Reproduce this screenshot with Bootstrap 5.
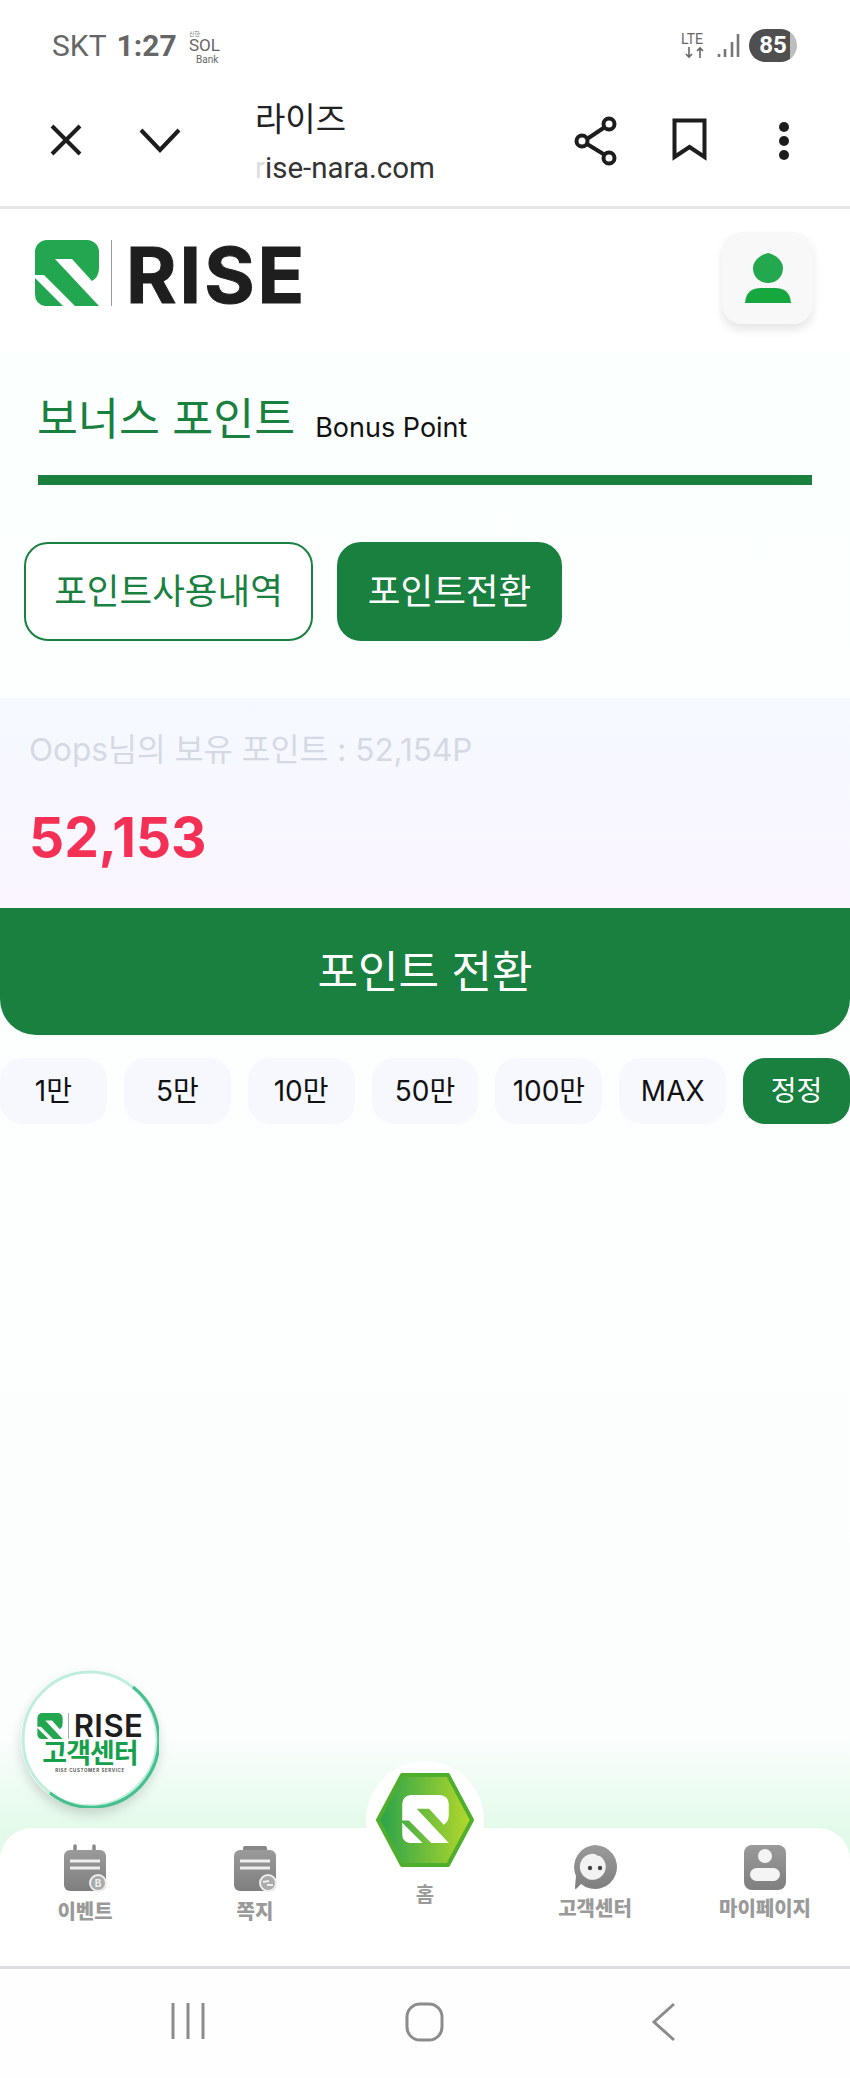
<!DOCTYPE html>
<html lang="ko">
<head>
  <meta charset="UTF-8" />
  <meta name="viewport" content="width=device-width, initial-scale=1.0"/>
  <title>라이즈 - 포인트전환</title>
  <link href="https://cdn.jsdelivr.net/npm/bootstrap@5.3.0/dist/css/bootstrap.min.css" rel="stylesheet">
  <style>
    html, body { margin: 0; }
    body { width: 850px; height: 2078px; overflow: hidden; background: #fff; font-family: Inter, "Noto Sans CJK KR", sans-serif; color: #111; }
    .phone-status { height: 75px; padding: 29px 53px 0 52px; font-family: Roboto, "Noto Sans CJK KR", sans-serif; color: #666; }
    .status-carrier { font-size: 30px; line-height: 34px; }
    .status-time { font-size: 30px; line-height: 34px; font-weight: 700; margin-left: 10px; }
    .status-sol { margin-left: 12px; }
    .status-right { padding-top: 3px; }
    .status-battery { width: 48px; height: 33px; margin-top: -3px; border-radius: 17px; background: linear-gradient(90deg, #4f4f4f 85%, #bdbdbd 85%); color: #fff; font-size: 24px; font-weight: 700; line-height: 33px; text-align: center; }
    .browser-bar { height: 134px; border-bottom: 3px solid #e6e6e6; position: relative; }
    .bar-ico { position: absolute; display: block; }
    .browser-title { position: absolute; left: 255px; top: 22px; font-size: 33px; line-height: 44px; color: #222; }
    .browser-url { position: absolute; left: 255px; top: 75px; font-family: Roboto, sans-serif; font-size: 29.500px; line-height: 36px; color: #333; }
    .browser-url i { font-style: normal; color: #ddd; }
    .site-head { height: 143px; padding: 29px 37px 0 35px; }
    .logo-rule { width: 1px; height: 66px; background: #9a9a9a; margin: 0 14px 0 12px; }
    .logo-word { font-family: Inter, sans-serif; font-weight: 700; font-size: 77px; line-height: 66px; letter-spacing: 3px; padding-top: 4px; color: #1e1e1e; -webkit-text-stroke: 1px #1e1e1e; }
    .profile-btn { width: 91px; height: 92px; margin-top: -6px; border-radius: 20px; background: #f8f8f8; box-shadow: 0 6px 10px rgba(0,0,0,.10); }
    .page-main { position: relative; height: 1614px; background: linear-gradient(#fbfffd 0, #fcfefe 85.5%, #e3faea 91.5%); }
    .title-wrap { margin: 0 38px; height: 133px; padding-top: 37px; border-bottom: 10px solid #198040; }
    .title-ko { font-size: 44.500px; line-height: 60px; color: #198040; font-weight: 400; margin-left: -1px; }
    .title-en { font-size: 27px; line-height: 60px; margin-left: 20px; padding-top: 9px; color: #111; }
    .tab-row { padding: 57px 0 0 24px; gap: 24px; }
    .tab-btn { height: 99px; border-radius: 24px; font-size: 35.500px; font-weight: 400; border: 2px solid #198040; color: #198040; background: #fff; padding: 0; display: flex; align-items: center; justify-content: center; }
    .tab-btn:hover { color: #198040; border-color: #198040; background: #fff; }
    .tab-wide { width: 289px; }
    .tab-narrow { width: 225px; }
    .tab-fill, .tab-fill:hover { background: #198040; color: #fff; }
    .point-panel { margin-top: 57px; height: 210px; padding: 30px 29px 0; background: linear-gradient(#f5f9ff, #faf5ff); }
    .point-owned { font-size: 31.500px; line-height: 44px; color: #d5d9e4; }
    .point-value { font-size: 55px; font-weight: 700; line-height: 70px; margin-top: 30px; color: #f43155; }
    .convert-btn { width: 100%; height: 127px; padding: 0; border: 0; border-radius: 0 0 36px 36px; background: #198040; color: #fff; font-size: 44px; font-weight: 400; }
    .convert-btn:hover { background: #198040; color: #fff; }
    .quick-row { margin-top: 23px; gap: 17px; }
    .quick-btn { flex: 1 1 0; height: 66px; padding: 0; border: 0; border-radius: 22px; background: #f7f8fe; color: #111; font-size: 28px; font-weight: 400; }
    .quick-btn:hover { background: #f7f8fe; color: #111; }
    .quick-on, .quick-on:hover { background: #198040; color: #fff; }
    .cs-float { position: absolute; left: 21px; top: 1318px; width: 138px; height: 138px; border-radius: 50%; background: radial-gradient(circle, #fff 78%, #e4f8ef 100%); box-shadow: 0 6px 12px rgba(0,0,0,.16); padding-top: 43px; }
    .cs-ring { position: absolute; left: 0; top: 0; }
    .cs-word { font-family: Inter, sans-serif; font-weight: 600; font-size: 31px; line-height: 26px; color: #1e1e1e; letter-spacing: .5px; }
    .cs-rule { width: 1px; height: 26px; background: #aaa; margin: 0 5px; }
    .cs-ko { font-size: 27px; line-height: 27px; margin-top: 1px; font-weight: 700; letter-spacing: -1px; color: #17a04c; }
    .cs-en { font-size: 4.500px; line-height: 7px; font-weight: 700; letter-spacing: .6px; color: #555; }
    .bottom-tabs { position: absolute; left: 0; right: 0; bottom: 0; height: 138px; padding-top: 16px; background: #fff; border-radius: 32px 32px 0 0; }
    .tab-label { font-size: 20px; line-height: 26px; font-weight: 800; color: #9a9a9a; margin-top: 4px; }
    .tab-label-low { margin-top: 7px; }
    .home-disc { position: absolute; left: 366px; top: -67px; width: 118px; height: 118px; border-radius: 50%; background: #fff; }
    .home-label { margin-top: 22px; font-weight: 700; }
    .home-cell { padding-top: 16px; }
    .sys-nav { height: 112px; border-top: 3px solid #dedde2; padding: 33px 0 0 170px; background: #fefefe; }
    .sys-home { margin-left: 199px; }
    .sys-back { margin-left: 206px; }
  </style>
</head>
<body>
  <svg width="0" height="0" class="position-absolute">
    <defs>
      <symbol id="rise-mark" viewBox="0 0 64 66">
        <path fill="currentColor" d="M0 12A12 12 0 0 1 12 0H52A12 12 0 0 1 64 12V28Q64 37 57 41L37 19H20L64 66H40L9 35H0Z"/>
        <path fill="currentColor" d="M0 38L28 66H10Q0 64 0 54Z"/>
      </symbol>
      <linearGradient id="gray-g" x1="0" y1="0" x2="0" y2="1"><stop offset="0" stop-color="#9a9a9a"/><stop offset="1" stop-color="#7f7f7f"/></linearGradient>
      <linearGradient id="hex-g" x1="0" y1="0" x2="1" y2="0"><stop offset="0" stop-color="#27a24b"/><stop offset="1" stop-color="#b6d92b"/></linearGradient>
    </defs>
  </svg>

  <div class="phone-status d-flex align-items-start">
    <span class="status-carrier">SKT</span>
    <span class="status-time">1:27</span>
    <svg class="status-sol" width="34" height="36" viewBox="0 0 34 36">
      <text x="0" y="7" font-size="6" fill="#777" font-family="Noto Sans CJK KR">신한</text>
      <text x="0" y="22" font-size="17" fill="#666" font-family="Roboto">SOL</text>
      <text x="7" y="34" font-size="10" fill="#666" font-family="Roboto">Bank</text>
    </svg>
    <div class="ms-auto d-flex align-items-start gap-2 status-right">
      <svg width="28" height="28" viewBox="0 0 28 28">
        <text x="0" y="12" font-size="14" fill="#666" font-family="Roboto">LTE</text>
        <path d="M8 15V25M5 22L8 25L11 22M19 26V16M16 19L19 16L22 19" fill="none" stroke="#666" stroke-width="1.600"/>
      </svg>
      <svg width="24" height="26" viewBox="0 0 24 26"><path d="M2 22V25M8 17V25M15 10V25M21 2V25" stroke="#777" stroke-width="2.600" fill="none"/></svg>
      <div class="status-battery">85</div>
    </div>
  </div>

  <div class="browser-bar">
    <svg class="bar-ico" style="left:50px;top:49px" width="32" height="32" viewBox="0 0 32 32"><path d="M2 2L30 30M30 2L2 30" stroke="#1d1d1d" stroke-width="4" fill="none"/></svg>
    <svg class="bar-ico" style="left:139px;top:52px" width="42" height="26" viewBox="0 0 42 26"><path d="M2 3L21 23L40 3" stroke="#1d1d1d" stroke-width="4" fill="none"/></svg>
    <div class="browser-title">라이즈</div>
    <div class="browser-url"><i>r</i>ise-nara.com</div>
    <svg class="bar-ico" style="left:574px;top:41px" width="44" height="50" viewBox="0 0 44 50"><path d="M31 11L13 23M13 28L31 39" stroke="#1d1d1d" stroke-width="4" fill="none"/><circle cx="35" cy="8" r="5.500" fill="none" stroke="#1d1d1d" stroke-width="4"/><circle cx="8" cy="25" r="5.500" fill="none" stroke="#1d1d1d" stroke-width="4"/><circle cx="35" cy="42" r="5.500" fill="none" stroke="#1d1d1d" stroke-width="4"/></svg>
    <svg class="bar-ico" style="left:672px;top:43px" width="35" height="43" viewBox="0 0 35 43"><path d="M2.500 2.500H32.500V39L17.500 29L2.500 39Z" stroke="#1d1d1d" stroke-width="4" fill="none"/></svg>
    <svg class="bar-ico" style="left:778px;top:46px" width="12" height="40" viewBox="0 0 12 40"><circle cx="6" cy="6" r="5" fill="#1d1d1d"/><circle cx="6" cy="20" r="5" fill="#1d1d1d"/><circle cx="6" cy="34" r="5" fill="#1d1d1d"/></svg>
  </div>

  <header class="site-head d-flex justify-content-between align-items-start">
    <div class="d-flex align-items-center">
      <svg width="64" height="66" color="#22a650"><use href="#rise-mark"/></svg>
      <div class="logo-rule"></div>
      <div class="logo-word">RISE</div>
    </div>
    <div class="profile-btn d-flex align-items-center justify-content-center">
      <svg width="46" height="50" viewBox="0 0 46 50"><path d="M23 0C32 2 38 9 38 15C38 24 31 30 23 30C15 30 8 24 8 15C8 9 14 2 23 0Z" fill="#24a84e"/><path d="M0 50Q1 35 16 35H30Q45 35 46 50Z" fill="#16a83f"/></svg>
    </div>
  </header>

  <main class="page-main">
    <div class="title-wrap d-flex align-items-start">
      <span class="title-ko">보너스 포인트</span>
      <span class="title-en">Bonus Point</span>
    </div>

    <div class="tab-row d-flex">
      <button class="btn tab-btn tab-wide" type="button">포인트사용내역</button>
      <button class="btn tab-btn tab-narrow tab-fill" type="button">포인트전환</button>
    </div>

    <section class="point-panel">
      <div class="point-owned">Oops님의 보유 포인트 : 52,154P</div>
      <div class="point-value">52,153</div>
    </section>
    <button class="btn convert-btn" type="button">포인트 전환</button>

    <div class="quick-row d-flex">
      <button class="btn quick-btn" type="button">1만</button>
      <button class="btn quick-btn" type="button">5만</button>
      <button class="btn quick-btn" type="button">10만</button>
      <button class="btn quick-btn" type="button">50만</button>
      <button class="btn quick-btn" type="button">100만</button>
      <button class="btn quick-btn" type="button">MAX</button>
      <button class="btn quick-btn quick-on" type="button">정정</button>
    </div>

    <div class="cs-float text-center">
      <svg class="cs-ring" width="138" height="138" viewBox="0 0 138 138">
        <circle cx="69" cy="69" r="67" fill="none" stroke="#bfeedd" stroke-width="3"/>
        <path d="M112 17A67 67 0 0 1 29 123" fill="none" stroke="#45c08e" stroke-width="3"/>
      </svg>
      <div class="d-flex justify-content-center align-items-center">
        <svg width="26" height="26" color="#22a650"><use href="#rise-mark"/></svg>
        <div class="cs-rule"></div>
        <div class="cs-word">RISE</div>
      </div>
      <div class="cs-ko">고객센터</div>
      <div class="cs-en">RISE CUSTOMER SERVICE</div>
    </div>

    <nav class="bottom-tabs">
      <div class="row g-0 text-center">
        <div class="col">
          <svg width="44" height="48" viewBox="0 0 44 48"><path d="M12 2V10M31 2V10" stroke="#888" stroke-width="3.500" stroke-linecap="round"/><rect x="1" y="6" width="42" height="41" rx="6" fill="url(#gray-g)"/><path d="M7 17H37M7 24H37" stroke="#eee" stroke-width="3"/><circle cx="35" cy="39" r="8" fill="#aaa" stroke="#eee" stroke-width="2"/><text x="35" y="43" font-size="10" font-weight="700" fill="#eee" text-anchor="middle" font-family="Inter">B</text></svg>
          <div class="tab-label tab-label-low">이벤트</div>
        </div>
        <div class="col">
          <svg width="44" height="48" viewBox="0 0 44 48"><rect x="10" y="2" width="24" height="8" rx="2" fill="#888"/><rect x="1" y="6" width="42" height="41" rx="6" fill="url(#gray-g)"/><path d="M7 17H37M7 24H37" stroke="#eee" stroke-width="3"/><circle cx="35" cy="39" r="8" fill="#aaa" stroke="#eee" stroke-width="2"/><path d="M30 38L36 37M34 41L40 41" stroke="#eee" stroke-width="2"/></svg>
          <div class="tab-label tab-label-low">쪽지</div>
        </div>
        <div class="col position-relative home-cell">
          <div class="tab-label home-label">홈</div>
        </div>
        <div class="col">
          <svg width="44" height="48" viewBox="0 0 44 48"><path d="M22 1A22 22 0 1 1 8 40L3 45Q2 46 2 43L3 32A22 22 0 0 1 22 1Z" fill="url(#gray-g)"/><path d="M22 10Q24 12 27 12A13 13 0 1 1 22 10Z" fill="#f2f2f2"/><circle cx="17" cy="24" r="2.200" fill="#444"/><circle cx="27" cy="24" r="2.200" fill="#444"/></svg>
          <div class="tab-label">고객센터</div>
        </div>
        <div class="col">
          <svg width="44" height="48" viewBox="0 0 44 48"><rect x="1" y="1" width="42" height="45" rx="8" fill="url(#gray-g)"/><circle cx="22" cy="12" r="7" fill="#f4f4f4"/><rect x="7" y="24" width="30" height="13" rx="6.500" fill="#f4f4f4"/></svg>
          <div class="tab-label">마이페이지</div>
        </div>
      </div>
      <div class="home-disc d-flex align-items-center justify-content-center">
        <svg width="100" height="96" viewBox="0 0 100 96">
          <path d="M27 3H73L97 48L73 93H27L3 48Z" fill="url(#hex-g)" stroke="#4fae2c" stroke-width="4" stroke-linejoin="round"/>
          <svg x="27" y="23" width="47" height="48" color="#fff"><use href="#rise-mark"/></svg>
        </svg>
      </div>
    </nav>
  </main>

  <div class="sys-nav d-flex align-items-start">
    <svg width="36" height="38" viewBox="0 0 36 38"><path d="M3 1V37M18 1V37M33 1V37" stroke="#8c8c8c" stroke-width="3" fill="none"/></svg>
    <svg class="sys-home" width="40" height="40" viewBox="0 0 40 40"><rect x="2" y="2" width="35" height="36" rx="13" stroke="#8c8c8c" stroke-width="3" fill="none"/></svg>
    <svg class="sys-back" width="26" height="40" viewBox="0 0 26 40"><path d="M23 2L3 20L23 38" stroke="#8c8c8c" stroke-width="3" fill="none"/></svg>
  </div>

  <script src="https://cdn.jsdelivr.net/npm/bootstrap@5.3.0/dist/js/bootstrap.bundle.min.js"></script>
</body>
</html>
